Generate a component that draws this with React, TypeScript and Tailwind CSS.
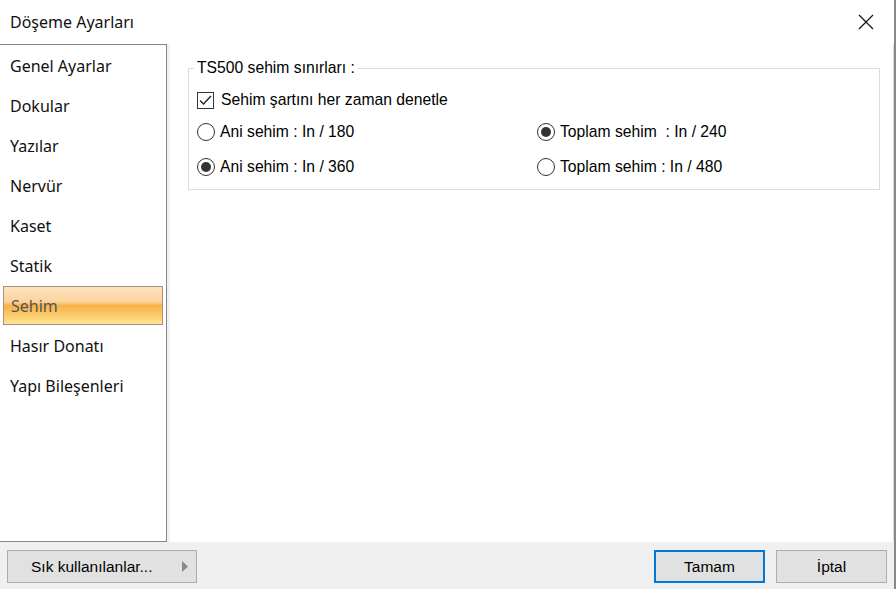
import React from 'react';

const items = ['Genel Ayarlar', 'Dokular', 'Yazılar', 'Nervür', 'Kaset', 'Statik', 'Sehim', 'Hasır Donatı', 'Yapı Bileşenleri'];

const Radio: React.FC<{ checked?: boolean; label: string }> = ({ checked = false, label }) => (
  <div className="flex items-center h-[20px]">
    <span className="w-[18px] h-[18px] rounded-full border border-[#333] bg-white flex items-center justify-center">
      {checked && <span className="w-[10px] h-[10px] rounded-full bg-[#333]" />}
    </span>
    <span className="ml-[5px] whitespace-pre">{label}</span>
  </div>
);

export default function App() {
  return (
    <div className="w-[896px] h-[589px] bg-white flex flex-col overflow-hidden text-black relative">
      <div className="h-[44px] flex items-center justify-between pl-[10px] pr-[18px] border-r-2 border-[#888]" style={{ fontFamily: '"Segoe UI", "Noto Sans", sans-serif' }}>
        <span className="text-[16px] text-[#111]">Döşeme Ayarları</span>
        <svg width="16" height="16" viewBox="0 0 16 16" className="mr-[2px]">
          <path d="M1 1L15 15M15 1L1 15" stroke="#111" strokeWidth="1.2" />
        </svg>
      </div>
      <div className="flex-1 flex border-r-2 border-[#888]">
        <div className="w-[167px] border-r border-t border-b border-[#828790] bg-white pt-[1px]" style={{ fontFamily: '"Segoe UI", "Noto Sans", sans-serif' }}>
          {items.map((it) => (
            it === 'Sehim' ? (
              <div key={it} className="mx-[3px] h-[39px] mb-[1px] flex items-center pl-[7px] text-[16px] text-[#555] border border-[#a99274] bg-[linear-gradient(to_bottom,#fde4c0_0%,#fcd39c_40%,#f7b14b_50%,#fbcf6e_80%,#fde59a_100%)]">
                {it}
              </div>
            ) : (
              <div key={it} className="h-[40px] flex items-center pl-[10px] text-[16px] text-[#111]">{it}</div>
            )
          ))}
        </div>
        <div className="w-[3px] bg-[#f0f0f0]" />
        <div className="flex-1 bg-white border-r border-[#dcdcdc] pt-[24px] pl-[18px] pr-[13px]" style={{ fontFamily: '"Liberation Sans", Arial, sans-serif' }}>
          <div className="relative border border-[#dcdcdc] h-[122px] text-[15.7px]">
            <span className="absolute left-[5px] top-[-10px] bg-white px-[3px] leading-[18px]">TS500 sehim sınırları :</span>
            <div className="pt-[21px] pl-[8px]">
              <div className="flex items-center h-[20px]">
                <span className="w-[17px] h-[17px] border border-[#333] bg-white flex items-center justify-center">
                  <svg width="13" height="11" viewBox="0 0 13 11"><path d="M1 5.5L4.5 9L12 1" fill="none" stroke="#222" strokeWidth="1.3" /></svg>
                </span>
                <span className="ml-[7px]">Sehim şartını her zaman denetle</span>
              </div>
              <div className="grid grid-cols-[340px_1fr] mt-[12px] gap-y-[15px]">
                <Radio label="Ani sehim : In / 180" />
                <Radio checked label="Toplam sehim  : In / 240" />
                <Radio checked label="Ani sehim : In / 360" />
                <Radio label="Toplam sehim : In / 480" />
              </div>
            </div>
          </div>
        </div>
      </div>
      <div className="h-[47px] bg-[#f0f0f0] flex items-center pl-[7px] pr-[7px] pt-[2px] border-r-2 border-[#888] text-[15.5px]" style={{ fontFamily: '"Liberation Sans", Arial, sans-serif' }}>
        <div className="w-[190px] h-[33px] bg-[#e1e1e1] border border-[#adadad] flex items-center pl-[23px] pr-[8px] justify-between">
          <span>Sık kullanılanlar...</span>
          <svg width="6" height="11" viewBox="0 0 6 11"><path d="M0 0L6 5.5L0 11Z" fill="#888" /></svg>
        </div>
        <div className="flex-1" />
        <div className="w-[111px] h-[33px] bg-[#e1e1e1] border-2 border-[#0078d7] flex items-center justify-center">Tamam</div>
        <div className="w-[111px] h-[33px] ml-[11px] bg-[#e1e1e1] border border-[#adadad] flex items-center justify-center">İptal</div>
      </div>
    </div>
  );
}
